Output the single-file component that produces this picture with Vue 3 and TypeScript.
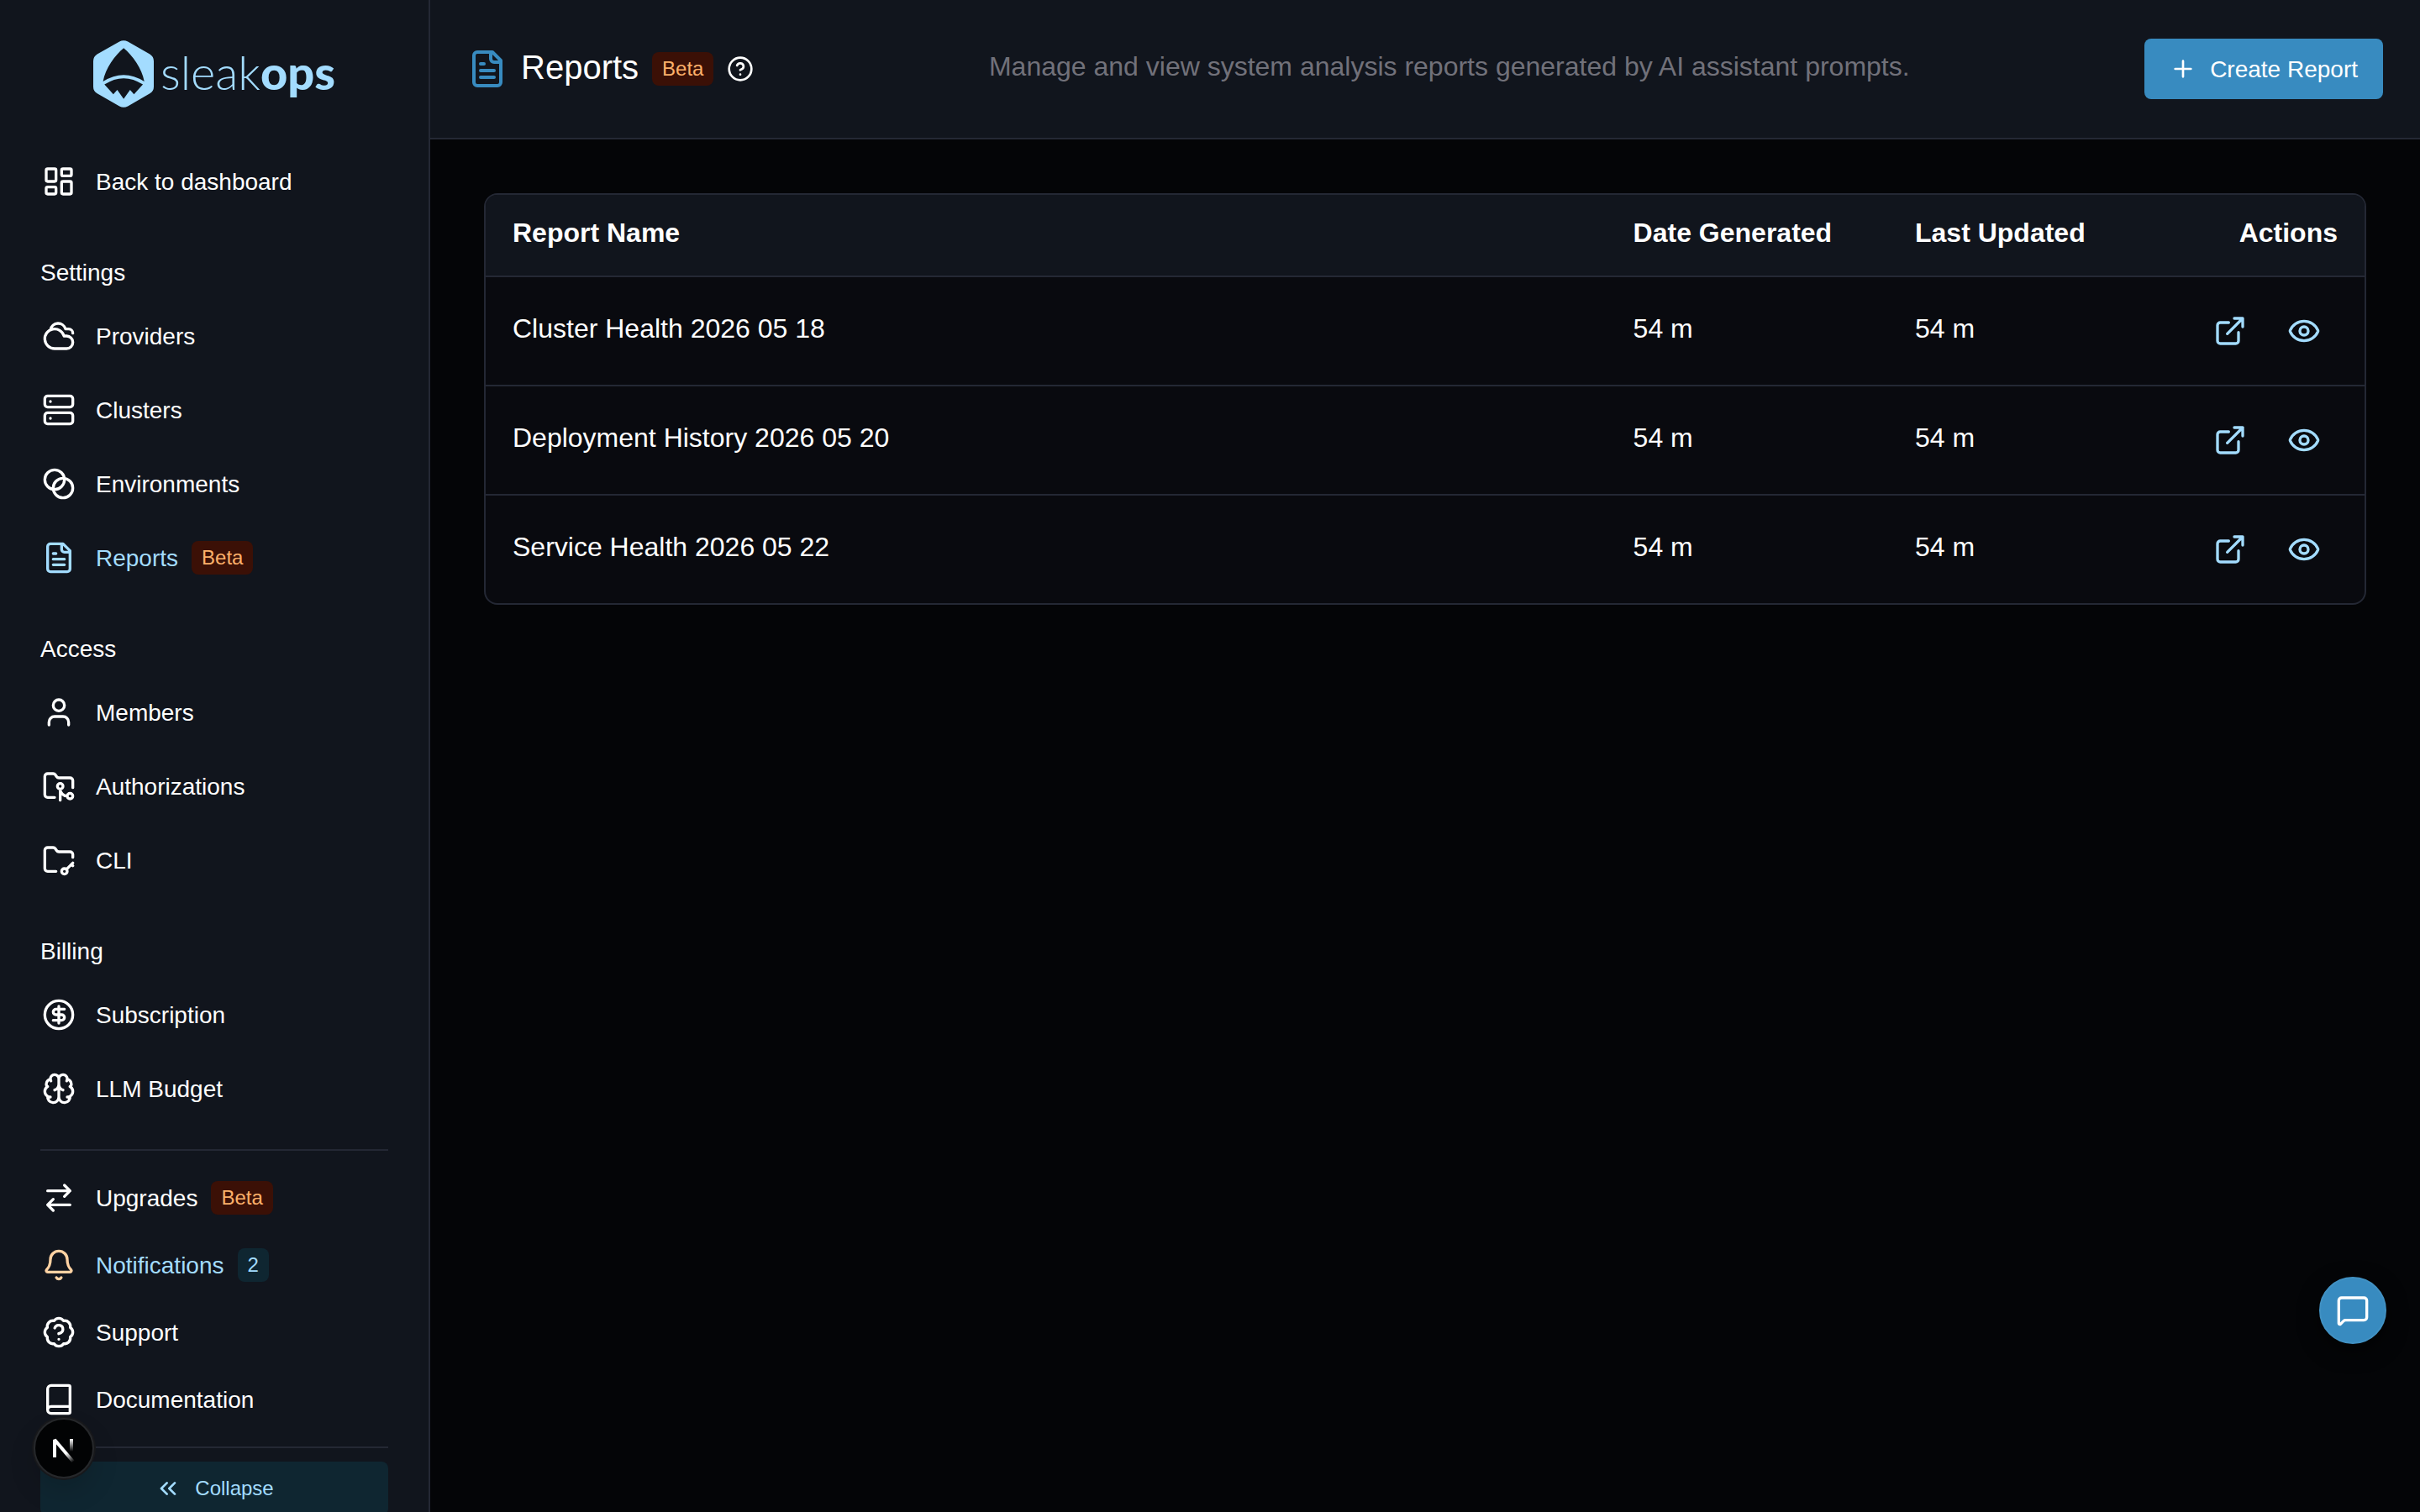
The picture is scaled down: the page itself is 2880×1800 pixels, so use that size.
<script setup lang="ts">
type IconName =
  | 'dashboard' | 'cloudy' | 'server' | 'blend' | 'file' | 'user' | 'folderGit' | 'folderKey'
  | 'dollar' | 'brain' | 'swap' | 'bell' | 'badgeHelp' | 'book' | 'help' | 'plus'
  | 'external' | 'eye' | 'chevrons' | 'message'

interface NavItem {
  label: string
  icon: IconName
  badge?: string
  tone?: 'beta' | 'count'
  active?: boolean
  alert?: boolean
}

interface NavSection {
  title?: string
  items: NavItem[]
}

interface Report {
  name: string
  generated: string
  updated: string
}

const icons: Record<IconName, string> = {
  dashboard:
    'M4 3h5a1 1 0 0 1 1 1v7a1 1 0 0 1-1 1H4a1 1 0 0 1-1-1V4a1 1 0 0 1 1-1z M15 3h5a1 1 0 0 1 1 1v3a1 1 0 0 1-1 1h-5a1 1 0 0 1-1-1V4a1 1 0 0 1 1-1z M15 12h5a1 1 0 0 1 1 1v7a1 1 0 0 1-1 1h-5a1 1 0 0 1-1-1v-7a1 1 0 0 1 1-1z M4 16h5a1 1 0 0 1 1 1v3a1 1 0 0 1-1 1H4a1 1 0 0 1-1-1v-3a1 1 0 0 1 1-1z',
  cloudy:
    'M17.5 21H9a7 7 0 1 1 6.71-9h1.79a4.5 4.5 0 1 1 0 9Z M22 10a3 3 0 0 0-3-3h-2.207a5.502 5.502 0 0 0-10.702.5',
  server:
    'M4 2h16a2 2 0 0 1 2 2v4a2 2 0 0 1-2 2H4a2 2 0 0 1-2-2V4a2 2 0 0 1 2-2z M4 14h16a2 2 0 0 1 2 2v4a2 2 0 0 1-2 2H4a2 2 0 0 1-2-2v-4a2 2 0 0 1 2-2z M6 6h.01 M6 18h.01',
  blend: 'M2 9a7 7 0 1 0 14 0a7 7 0 1 0-14 0 M8 15a7 7 0 1 0 14 0a7 7 0 1 0-14 0',
  file:
    'M15 2H6a2 2 0 0 0-2 2v16a2 2 0 0 0 2 2h12a2 2 0 0 0 2-2V7Z M14 2v4a2 2 0 0 0 2 2h4 M10 9H8 M16 13H8 M16 17H8',
  user: 'M19 21v-2a4 4 0 0 0-4-4H9a4 4 0 0 0-4 4v2 M8 7a4 4 0 1 0 8 0a4 4 0 1 0-8 0',
  folderGit:
    'M9 20H4a2 2 0 0 1-2-2V5a2 2 0 0 1 2-2h3.9a2 2 0 0 1 1.69.9l.81 1.2a2 2 0 0 0 1.67.9H20a2 2 0 0 1 2 2v5 M11 12a2 2 0 1 0 4 0a2 2 0 1 0-4 0 M18 19c-2.8 0-5-2.2-5-5v8 M18 19a2 2 0 1 0 4 0a2 2 0 1 0-4 0',
  folderKey:
    'M10 20H4a2 2 0 0 1-2-2V5a2 2 0 0 1 2-2h3.9a2 2 0 0 1 1.69.9l.81 1.2a2 2 0 0 0 1.67.9H20a2 2 0 0 1 2 2v2 M14 20a2 2 0 1 0 4 0a2 2 0 1 0-4 0 M22 14l-4.5 4.5 M21 15l1 1',
  dollar:
    'M2 12a10 10 0 1 0 20 0a10 10 0 1 0-20 0 M16 8h-6a2 2 0 1 0 0 4h4a2 2 0 1 1 0 4H8 M12 18V6',
  brain:
    'M12 5a3 3 0 1 0-5.997.125 4 4 0 0 0-2.526 5.77 4 4 0 0 0 .556 6.588A4 4 0 1 0 12 18Z M12 5a3 3 0 1 1 5.997.125 4 4 0 0 1 2.526 5.77 4 4 0 0 1-.556 6.588A4 4 0 1 1 12 18Z M15 13a4.5 4.5 0 0 1-3-4 4.5 4.5 0 0 1-3 4 M17.599 6.5a3 3 0 0 0 .399-1.375 M6.003 5.125A3 3 0 0 0 6.401 6.5 M3.477 10.896a4 4 0 0 1 .585-.396 M19.938 10.5a4 4 0 0 1 .585.396 M6 18a4 4 0 0 1-1.967-.516 M19.967 17.484A4 4 0 0 1 18 18',
  swap: 'M16 3l4 4-4 4 M20 7H4 M8 21l-4-4 4-4 M4 17h16',
  bell:
    'M10.268 21a2 2 0 0 0 3.464 0 M3.262 15.326A1 1 0 0 0 4 17h16a1 1 0 0 0 .74-1.673C19.41 13.956 18 12.499 18 8A6 6 0 0 0 6 8c0 4.499-1.411 5.956-2.738 7.326',
  badgeHelp:
    'M3.85 8.62a4 4 0 0 1 4.78-4.77 4 4 0 0 1 6.74 0 4 4 0 0 1 4.78 4.78 4 4 0 0 1 0 6.74 4 4 0 0 1-4.77 4.78 4 4 0 0 1-6.75 0 4 4 0 0 1-4.78-4.77 4 4 0 0 1 0-6.76Z M9.09 9a3 3 0 0 1 5.83 1c0 2-3 3-3 3 M12 17h.01',
  book: 'M4 19.5v-15A2.5 2.5 0 0 1 6.5 2H19a1 1 0 0 1 1 1v18a1 1 0 0 1-1 1H6.5a1 1 0 0 1 0-5H20',
  help: 'M2 12a10 10 0 1 0 20 0a10 10 0 1 0-20 0 M9.09 9a3 3 0 0 1 5.83 1c0 2-3 3-3 3 M12 17h.01',
  plus: 'M5 12h14 M12 5v14',
  external: 'M15 3h6v6 M10 14L21 3 M18 13v6a2 2 0 0 1-2 2H5a2 2 0 0 1-2-2V8a2 2 0 0 1 2-2h6',
  eye:
    'M2.062 12.348a1 1 0 0 1 0-.696 10.75 10.75 0 0 1 19.876 0 1 1 0 0 1 0 .696 10.75 10.75 0 0 1-19.876 0 M9 12a3 3 0 1 0 6 0a3 3 0 1 0-6 0',
  chevrons: 'M11 17l-5-5 5-5 M18 17l-5-5 5-5',
  message:
    'M22 17a2 2 0 0 1-2 2H6.828a2 2 0 0 0-1.414.586l-2.202 2.202A.71.71 0 0 1 2 21.286V5a2 2 0 0 1 2-2h16a2 2 0 0 1 2 2z',
}

const sections: NavSection[] = [
  { items: [{ label: 'Back to dashboard', icon: 'dashboard' }] },
  {
    title: 'Settings',
    items: [
      { label: 'Providers', icon: 'cloudy' },
      { label: 'Clusters', icon: 'server' },
      { label: 'Environments', icon: 'blend' },
      { label: 'Reports', icon: 'file', badge: 'Beta', tone: 'beta', active: true },
    ],
  },
  {
    title: 'Access',
    items: [
      { label: 'Members', icon: 'user' },
      { label: 'Authorizations', icon: 'folderGit' },
      { label: 'CLI', icon: 'folderKey' },
    ],
  },
  {
    title: 'Billing',
    items: [
      { label: 'Subscription', icon: 'dollar' },
      { label: 'LLM Budget', icon: 'brain' },
    ],
  },
]

const footerItems: NavItem[] = [
  { label: 'Upgrades', icon: 'swap', badge: 'Beta', tone: 'beta' },
  { label: 'Notifications', icon: 'bell', badge: '2', tone: 'count', active: true, alert: true },
  { label: 'Support', icon: 'badgeHelp' },
  { label: 'Documentation', icon: 'book' },
]

const reports: Report[] = [
  { name: 'Cluster Health 2026 05 18', generated: '54 m', updated: '54 m' },
  { name: 'Deployment History 2026 05 20', generated: '54 m', updated: '54 m' },
  { name: 'Service Health 2026 05 22', generated: '54 m', updated: '54 m' },
]
</script>

<template>
  <div class="app">
    <aside class="sidebar">
      <a class="logo" href="#">
        <svg class="logo-mark" viewBox="60 54 217 240" aria-hidden="true">
          <path
            class="logo-shape"
            d="M154 58Q169 50 184 58L263 103Q277 112 277 128V220Q277 236 263 244L184 290Q169 298 154 290L74 244Q60 236 60 220V128Q60 112 74 103Z"
          />
          <path class="logo-cut" d="M169 81C201 108 234 152 243 201Q169 154 95 201C104 152 137 108 169 81Z" />
          <path class="logo-cut" d="M100 212Q169 167 238 212L206 247L192 231L169 264L146 231L132 247Z" />
        </svg>
        <span class="logo-text">sleak<b>ops</b></span>
      </a>

      <nav class="nav">
        <section v-for="(section, i) in sections" :key="i">
          <h2 v-if="section.title" class="section-title">{{ section.title }}</h2>
          <a
            v-for="item in section.items"
            :key="item.label"
            href="#"
            class="nav-item"
            :class="{ active: item.active }"
          >
            <svg class="icon" viewBox="0 0 24 24" aria-hidden="true"><path :d="icons[item.icon]" /></svg>
            <span class="label">{{ item.label }}</span>
            <span v-if="item.badge" class="badge" :class="item.tone">{{ item.badge }}</span>
          </a>
        </section>
      </nav>

      <nav class="nav-footer">
        <a
          v-for="item in footerItems"
          :key="item.label"
          href="#"
          class="nav-item compact"
          :class="{ active: item.active, alert: item.alert }"
        >
          <svg class="icon" viewBox="0 0 24 24" aria-hidden="true"><path :d="icons[item.icon]" /></svg>
          <span class="label">{{ item.label }}</span>
          <span v-if="item.badge" class="badge" :class="item.tone">{{ item.badge }}</span>
        </a>
      </nav>

      <div class="collapse-area">
        <button type="button" class="collapse">
          <svg class="icon small" viewBox="0 0 24 24" aria-hidden="true"><path :d="icons.chevrons" /></svg>
          Collapse
        </button>
      </div>
    </aside>

    <main class="main">
      <header class="header">
        <div class="title-group">
          <svg class="icon large" viewBox="0 0 24 24" aria-hidden="true"><path :d="icons.file" /></svg>
          <h1 class="title">Reports</h1>
          <span class="badge beta">Beta</span>
          <button type="button" class="help" aria-label="Help">
            <svg class="icon small" viewBox="0 0 24 24" aria-hidden="true"><path :d="icons.help" /></svg>
          </button>
        </div>
        <p class="description">Manage and view system analysis reports generated by AI assistant prompts.</p>
        <button type="button" class="create">
          <svg class="icon small" viewBox="0 0 24 24" aria-hidden="true"><path :d="icons.plus" /></svg>
          <span class="label">Create Report</span>
        </button>
      </header>

      <div class="content">
        <div class="table-card">
          <table class="table">
            <colgroup>
              <col class="col-name" />
              <col class="col-date" />
              <col class="col-date" />
              <col class="col-actions" />
            </colgroup>
            <thead>
              <tr>
                <th scope="col">Report Name</th>
                <th scope="col">Date Generated</th>
                <th scope="col">Last Updated</th>
                <th scope="col">Actions</th>
              </tr>
            </thead>
            <tbody>
              <tr v-for="report in reports" :key="report.name">
                <td><p class="cell-text">{{ report.name }}</p></td>
                <td><p class="cell-text">{{ report.generated }}</p></td>
                <td><p class="cell-text">{{ report.updated }}</p></td>
                <td>
                  <div class="actions">
                    <button type="button" class="action" aria-label="Open report">
                      <svg class="icon" viewBox="0 0 24 24" aria-hidden="true"><path :d="icons.external" /></svg>
                    </button>
                    <button type="button" class="action" aria-label="Preview report">
                      <svg class="icon" viewBox="0 0 24 24" aria-hidden="true"><path :d="icons.eye" /></svg>
                    </button>
                  </div>
                </td>
              </tr>
            </tbody>
          </table>
        </div>
      </div>
    </main>

    <button type="button" class="chat" aria-label="Open chat">
      <svg class="icon" viewBox="0 0 24 24" aria-hidden="true"><path :d="icons.message" /></svg>
    </button>

    <button type="button" class="dev-tools" aria-label="Open developer tools">
      <svg class="dev-mark" viewBox="0 0 40 40" aria-hidden="true">
        <defs>
          <linearGradient id="dev-diagonal" gradientUnits="userSpaceOnUse" x1="24" y1="25" x2="32" y2="36">
            <stop offset="0" stop-color="#fff" />
            <stop offset="1" stop-color="#fff" stop-opacity="0" />
          </linearGradient>
          <linearGradient id="dev-stem" gradientUnits="userSpaceOnUse" x1="0" y1="9" x2="0" y2="24">
            <stop offset="0" stop-color="#fff" />
            <stop offset="1" stop-color="#fff" stop-opacity="0" />
          </linearGradient>
        </defs>
        <path d="M9 31V10L31 36" fill="none" stroke="url(#dev-diagonal)" stroke-width="4" stroke-linejoin="bevel" />
        <path d="M29 9V25" fill="none" stroke="url(#dev-stem)" stroke-width="4" />
      </svg>
    </button>
  </div>
</template>

<style>
body {
  background: #040507;
}
</style>

<style scoped>
.app {
  display: flex;
  min-height: 100vh;
  background: #040507;
  color: #fff;
  font-family: 'Liberation Sans', Arial, sans-serif;
  font-size: 28px;
  line-height: 42px;
}

.app *,
.app {
  box-sizing: border-box;
}

a {
  color: inherit;
  text-decoration: none;
}

button {
  border: 0;
  padding: 0;
  background: none;
  color: inherit;
  font: inherit;
  cursor: pointer;
}

h1,
h2,
p {
  margin: 0;
  font-weight: 400;
}

.icon {
  display: block;
  flex: none;
  width: 40px;
  height: 40px;
  fill: none;
  stroke: currentColor;
  stroke-width: 2;
  stroke-linecap: round;
  stroke-linejoin: round;
}

.icon.small {
  width: 32px;
  height: 32px;
}

.icon.large {
  width: 48px;
  height: 48px;
  color: #388bc0;
}

.label {
  padding-top: 2px;
}

.sidebar {
  position: sticky;
  top: 0;
  flex: none;
  display: flex;
  flex-direction: column;
  width: 512px;
  height: 100vh;
  padding: 0 48px;
  overflow: hidden;
  background: #11151d;
  border-right: 2px solid #242834;
}

.logo {
  flex: none;
  display: flex;
  align-items: center;
  justify-content: center;
  gap: 8px;
  height: 172px;
  padding-top: 4px;
  color: #a3dcff;
}

.logo-mark {
  width: 72px;
  height: 80px;
}

.logo-shape {
  fill: currentColor;
}

.logo-cut {
  fill: #11151d;
}

.logo-text {
  padding-bottom: 4px;
  font-family: Lato, sans-serif;
  font-size: 56px;
  font-weight: 300;
  line-height: 64px;
}

.logo-text b {
  font-weight: 900;
}

.nav {
  flex: none;
  padding-bottom: 28px;
  border-bottom: 2px solid #242834;
}

.section-title {
  padding: 44px 0 10px;
  font-size: 28px;
  line-height: 42px;
}

.nav-item {
  display: flex;
  align-items: center;
  height: 88px;
  padding-left: 2px;
}

.nav-item .icon {
  margin-right: 24px;
}

.nav-item.compact {
  height: 80px;
}

.nav-item.active {
  color: #a3dcff;
}

.nav-item.alert .icon {
  color: #ffd2a3;
}

.badge {
  margin-left: 16px;
  padding: 0 12px;
  border-radius: 8px;
  font-size: 24px;
  line-height: 40px;
}

.badge.beta {
  background: #3b1006;
  color: #fdb06a;
}

.badge.count {
  background: #0f2631;
  color: #a3dcff;
}

.nav-footer {
  flex: none;
  padding: 16px 0;
  border-bottom: 2px solid #242834;
}

.collapse-area {
  flex: none;
  padding: 16px 0;
}

.collapse {
  display: flex;
  align-items: center;
  justify-content: center;
  gap: 16px;
  width: 100%;
  height: 64px;
  border-radius: 8px;
  background: #0f2631;
  color: #a3dcff;
  font-size: 24px;
}

.main {
  flex: 1;
  min-width: 0;
}

.header {
  display: flex;
  align-items: center;
  justify-content: space-between;
  height: 166px;
  padding: 0 44px;
  background: #11151d;
  border-bottom: 2px solid #242834;
}

.title-group {
  display: flex;
  align-items: center;
}

.title {
  margin-left: 16px;
  padding-bottom: 4px;
  font-size: 40px;
  line-height: 48px;
}

.help {
  margin-left: 16px;
}

.description {
  padding-bottom: 6px;
  color: #71717a;
  font-size: 32px;
  line-height: 48px;
}

.create {
  display: flex;
  align-items: center;
  gap: 16px;
  height: 72px;
  padding: 0 30px;
  border-radius: 8px;
  background: #388bc0;
}

.content {
  padding: 64px;
}

.table-card {
  overflow: hidden;
  border: 2px solid #242834;
  border-radius: 16px;
  background: #090a0f;
}

.table {
  width: 100%;
  table-layout: fixed;
  border-collapse: separate;
  border-spacing: 0;
  font-size: 32px;
  line-height: 48px;
}

.col-name {
  width: 60%;
}

.col-date {
  width: 15%;
}

.col-actions {
  width: 10%;
}

th,
td {
  padding: 0 24px;
  text-align: left;
  vertical-align: middle;
}

th {
  padding-top: 21px;
  padding-bottom: 27px;
  background: #11151d;
  border-bottom: 2px solid #242834;
  font-weight: 700;
}

th:first-child,
td:first-child {
  padding-left: 32px;
}

th:last-child,
td:last-child {
  padding-right: 32px;
  text-align: right;
}

td {
  height: 130px;
  border-bottom: 2px solid #242834;
}

tbody tr:last-child td {
  height: 128px;
  border-bottom: 0;
}

.cell-text {
  padding-bottom: 6px;
}

.actions {
  display: flex;
  justify-content: flex-end;
  gap: 8px;
  color: #a3dcff;
}

.action {
  display: flex;
  align-items: center;
  justify-content: center;
  width: 80px;
  height: 80px;
}

.chat {
  position: fixed;
  right: 40px;
  bottom: 200px;
  display: flex;
  align-items: center;
  justify-content: center;
  width: 80px;
  height: 80px;
  border: 2px solid #4191c3;
  border-radius: 50%;
  background: #388bc0;
  box-shadow: 0 8px 24px rgba(0, 0, 0, 0.6);
}

.dev-tools {
  position: fixed;
  left: 40px;
  bottom: 40px;
  display: flex;
  align-items: center;
  justify-content: center;
  width: 72px;
  height: 72px;
  border: 2px solid #26282b;
  border-radius: 50%;
  background: #020304;
  box-shadow: 0 0 0 2px #17181b, 0 16px 32px rgba(0, 0, 0, 0.14);
}

.dev-mark {
  width: 40px;
  height: 40px;
}
</style>
